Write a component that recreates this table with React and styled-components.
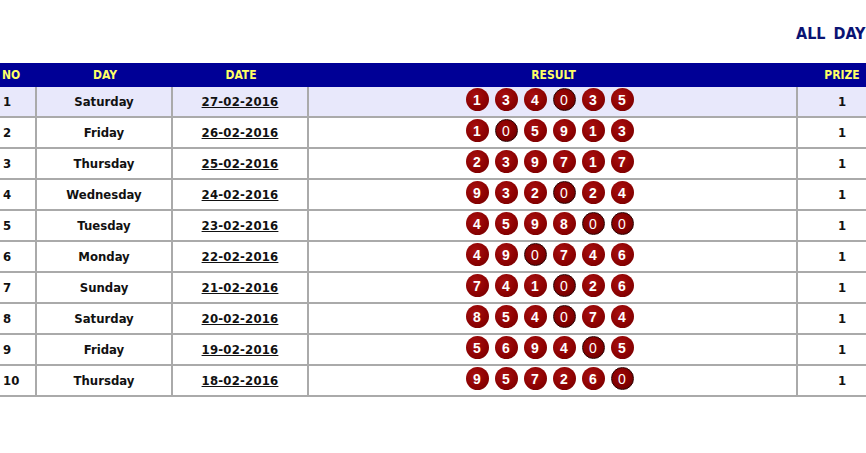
import React from "react";
import styled, { createGlobalStyle } from "styled-components";

const Global = createGlobalStyle`
  html, body { margin: 0; padding: 0; background: #fff; }
  body { overflow: hidden; font-family: "DejaVu Sans Condensed", "DejaVu Sans", sans-serif; }
`;

const Page = styled.div`
  width: 900px;
`;

const Title = styled.h2`
  margin: 24px 0 19px 796px;
  font-size: 16px;
  line-height: 20px;
  font-weight: bold;
  color: #0a1373;
  white-space: nowrap;
  word-spacing: 3px;
`;

const Table = styled.table`
  border-collapse: separate;
  border-spacing: 0;
  table-layout: fixed;
  width: 886px;
`;

const HeadCell = styled.th`
  background: #000096;
  color: #ffff66;
  font-size: 12px;
  font-weight: bold;
  height: 24px;
  padding: 0 0 0 ${(p) => (p.$left ? "2px" : "0")};
  text-align: ${(p) => (p.$left ? "left" : "center")};
  width: ${(p) => p.$w}px;
  box-sizing: border-box;
  vertical-align: middle;
`;

const Row = styled.tr`
  background: ${(p) => (p.$hl ? "#e8e8fb" : "#fff")};
`;

const Cell = styled.td`
  height: 31px;
  box-sizing: border-box;
  padding: 0 0 ${(p) => (p.$balls ? "4px" : "0")} ${(p) => (p.$left ? "3px" : "0")};
  border-bottom: 2px solid #aaaaaa;
  border-right: ${(p) => (p.$last ? "none" : "2px solid #aaaaaa")};
  text-align: ${(p) => (p.$left ? "left" : "center")};
  font-size: 13px;
  font-weight: bold;
  color: #111;
  vertical-align: middle;
`;

const DateLink = styled.span`
  text-decoration: underline;
  color: #111;
  letter-spacing: 0.2px;
`;

const Balls = styled.div`
  display: flex;
  justify-content: center;
`;

const Ball = styled.span`
  width: 23px;
  height: 23px;
  margin-right: 6px;
  border-radius: 50%;
  box-sizing: border-box;
  display: flex;
  align-items: center;
  justify-content: center;
  background: ${(p) =>
    p.$zero
      ? "radial-gradient(circle at 40% 35%, #9a0606 0%, #820000 55%, #5e0000 100%)"
      : "radial-gradient(circle at 40% 35%, #a81010 0%, #8e0202 55%, #6e0000 100%)"};
  border: ${(p) => (p.$zero ? "1px solid #2a0000" : "none")};
  color: #fff;
  font-family: "Liberation Sans", Arial, sans-serif;
  font-size: 14px;
  font-weight: ${(p) => (p.$zero ? "normal" : "bold")};
  line-height: 1;
`;

const rows = [
  ["1", "Saturday", "27-02-2016", "134035"],
  ["2", "Friday", "26-02-2016", "105913"],
  ["3", "Thursday", "25-02-2016", "239717"],
  ["4", "Wednesday", "24-02-2016", "932024"],
  ["5", "Tuesday", "23-02-2016", "459800"],
  ["6", "Monday", "22-02-2016", "490746"],
  ["7", "Sunday", "21-02-2016", "741026"],
  ["8", "Saturday", "20-02-2016", "854074"],
  ["9", "Friday", "19-02-2016", "569405"],
  ["10", "Thursday", "18-02-2016", "957260"],
];

export default function App() {
  return (
    <Page>
      <Global />
      <Title>ALL DAYS RESULT</Title>
      <Table>
        <thead>
          <tr>
            <HeadCell $left $w={37}>NO</HeadCell>
            <HeadCell $w={136}>DAY</HeadCell>
            <HeadCell $w={136}>DATE</HeadCell>
            <HeadCell $w={489}>RESULT</HeadCell>
            <HeadCell $w={88}>PRIZE</HeadCell>
          </tr>
        </thead>
        <tbody>
          {rows.map(([no, day, date, res], i) => (
            <Row key={no} $hl={i === 0}>
              <Cell $left>{no}</Cell>
              <Cell>{day}</Cell>
              <Cell>
                <DateLink>{date}</DateLink>
              </Cell>
              <Cell $balls>
                <Balls>
                  {res.split("").map((d, j) => (
                    <Ball key={j} $zero={d === "0"}>
                      {d}
                    </Ball>
                  ))}
                </Balls>
              </Cell>
              <Cell $last>1</Cell>
            </Row>
          ))}
        </tbody>
      </Table>
    </Page>
  );
}
